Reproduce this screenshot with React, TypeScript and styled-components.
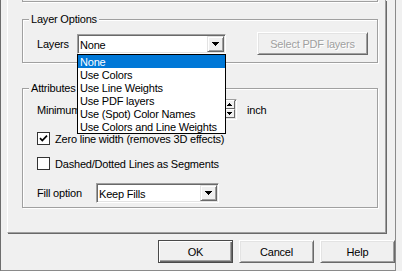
import styled, { createGlobalStyle } from "styled-components";

const GlobalStyle = createGlobalStyle`
  html, body {
    margin: 0;
    padding: 0;
    background: #f0f0f0;
  }
  body {
    font-family: "Liberation Sans", Arial, sans-serif;
    font-size: 11px;
    letter-spacing: -0.2px;
    color: #000;
  }
`;

const Screen = styled.div`
  width: 402px;
  height: 271px;
  display: flex;
  background: #f0f0f0;
  overflow: hidden;
`;

const Dialog = styled.div`
  width: 396px;
  height: 271px;
  box-sizing: border-box;
  border-left: 1px solid #6d6d6d;
  border-right: 1px solid #8a8a8a;
  border-bottom: 1px solid #8a8a8a;
  display: flex;
  flex-direction: column;
`;

const TabPage = styled.div`
  margin-left: 6px;
  width: 379px;
  height: 233px;
  flex-shrink: 0;
  box-sizing: border-box;
  border-left: 1px solid #fff;
  border-right: 1px solid #a0a0a0;
  border-bottom: 1px solid #a0a0a0;
  box-shadow: 1px 1px 0 #696969;
  display: flex;
  flex-direction: column;
  align-items: flex-start;
`;

const PrevGroupEdge = styled.div`
  margin-left: 14px;
  width: 356px;
  height: 2px;
  box-sizing: border-box;
  border: 1px solid #a0a0a0;
  border-top: none;
  box-shadow: 1px 1px 0 #fff;
`;

const Group = styled.div<{ $top: number; $height: number }>`
  position: relative;
  margin-left: 14px;
  margin-top: ${(p) => p.$top}px;
  width: 356px;
  height: ${(p) => p.$height}px;
  box-sizing: border-box;
  border: 1px solid #a0a0a0;
  box-shadow: inset 1px 1px 0 #fff, 1px 1px 0 #fff;
  padding-left: 14px;
  display: flex;
  flex-direction: column;
  align-items: flex-start;
`;

const GroupTitle = styled.span`
  position: absolute;
  top: -7px;
  left: 6px;
  padding: 0 2px;
  line-height: 13px;
  background: #f0f0f0;
`;

const Row = styled.div<{ $top: number; $height: number }>`
  display: flex;
  align-items: center;
  margin-top: ${(p) => p.$top}px;
  height: ${(p) => p.$height}px;
`;

const Label = styled.span<{ $width?: number; $left?: number }>`
  width: ${(p) => (p.$width ? `${p.$width}px` : "auto")};
  margin-left: ${(p) => p.$left ?? 0}px;
  flex-shrink: 0;
  line-height: 13px;
  padding-top: 1px;
  white-space: nowrap;
`;

const ComboWrap = styled.div<{ $width: number }>`
  position: relative;
  z-index: 10;
  width: ${(p) => p.$width}px;
  height: 20px;
`;

const Combo = styled.div`
  width: 100%;
  height: 100%;
  box-sizing: border-box;
  display: flex;
  padding: 1px;
  background: #fff;
  border-top: 1px solid #a0a0a0;
  border-left: 1px solid #a0a0a0;
  border-bottom: 1px solid #fff;
  border-right: 1px solid #fff;
  box-shadow: inset 1px 1px 0 #696969, inset -1px -1px 0 #e3e3e3;
`;

const ComboText = styled.span`
  flex: 1;
  padding-left: 1px;
  line-height: 16px;
  padding-top: 1px;
  box-sizing: border-box;
  white-space: nowrap;
  overflow: hidden;
`;

const DropButton = styled.div`
  width: 17px;
  height: 16px;
  box-sizing: border-box;
  display: flex;
  align-items: center;
  justify-content: center;
  background: #f0f0f0;
  border-top: 1px solid #e3e3e3;
  border-left: 1px solid #e3e3e3;
  border-right: 1px solid #696969;
  border-bottom: 1px solid #696969;
  box-shadow: inset 1px 1px 0 #fff, inset -1px -1px 0 #a0a0a0;
`;

const DropList = styled.div`
  position: absolute;
  top: 100%;
  left: 0;
  width: 100%;
  box-sizing: border-box;
  border: 1px solid #000;
  background: #fff;
`;

const ListItem = styled.div<{ $selected?: boolean }>`
  height: 13px;
  line-height: 13px;
  padding-left: 2px;
  padding-top: 1px;
  box-sizing: border-box;
  white-space: nowrap;
  overflow: hidden;
  background: ${(p) => (p.$selected ? "#0078d7" : "#fff")};
  color: ${(p) => (p.$selected ? "#fff" : "#000")};
`;

const PushButton = styled.button<{ $default?: boolean; $width: number; $left?: number }>`
  width: ${(p) => p.$width}px;
  height: 23px;
  margin: 0 0 0 ${(p) => p.$left ?? 0}px;
  padding: 1px 0 0;
  flex-shrink: 0;
  box-sizing: border-box;
  font: inherit;
  letter-spacing: inherit;
  color: #000;
  background: #f0f0f0;
  border-top: 1px solid ${(p) => (p.$default ? "#4a4a4a" : "#fff")};
  border-left: 1px solid ${(p) => (p.$default ? "#4a4a4a" : "#fff")};
  border-right: 1px solid ${(p) => (p.$default ? "#4a4a4a" : "#696969")};
  border-bottom: 1px solid ${(p) => (p.$default ? "#4a4a4a" : "#696969")};
  box-shadow: ${(p) =>
    p.$default
      ? "inset 1px 1px 0 #fff, inset -1px -1px 0 #696969, inset -2px -2px 0 #a0a0a0"
      : "inset 1px 1px 0 #e3e3e3, inset -1px -1px 0 #a0a0a0"};

  &:disabled {
    color: #a0a0a0;
    text-shadow: 1px 1px 0 #fff;
  }
`;

const EditBox = styled.div<{ $left: number }>`
  width: 88px;
  height: 21px;
  margin-left: ${(p) => p.$left}px;
  box-sizing: border-box;
  display: flex;
  justify-content: flex-end;
  background: #fff;
  border-top: 1px solid #a0a0a0;
  border-left: 1px solid #a0a0a0;
  border-bottom: 1px solid #fff;
  border-right: 1px solid #fff;
  box-shadow: inset 1px 1px 0 #696969, inset -1px -1px 0 #e3e3e3;
`;

const UpDown = styled.div`
  width: 11px;
  display: flex;
  flex-direction: column;
  margin: 0 1px 1px 0;
`;

const SpinButton = styled.div`
  flex: 1;
  display: flex;
  align-items: center;
  justify-content: center;
  box-sizing: border-box;
  background: #f0f0f0;
  border-top: 1px solid #fff;
  border-left: 1px solid #fff;
  border-right: 1px solid #696969;
  border-bottom: 1px solid #696969;
`;

const CheckRow = styled.label<{ $top: number }>`
  display: flex;
  align-items: center;
  gap: 5px;
  margin-top: ${(p) => p.$top}px;
  height: 13px;
  line-height: 13px;
`;

const CheckBox = styled.span`
  width: 13px;
  height: 13px;
  box-sizing: border-box;
  flex-shrink: 0;
  border: 1px solid #333;
  background: #fff;
  display: flex;
  align-items: center;
  justify-content: center;
`;

const CheckText = styled.span`
  padding-top: 1px;
  white-space: nowrap;
`;

const ButtonBar = styled.div`
  display: flex;
  gap: 6px;
  margin: 7px 0 0 157px;
`;

const Arrow = () => (
  <svg width="7" height="4" viewBox="0 0 7 4" shapeRendering="crispEdges">
    {[0, 1, 2, 3].map((i) => (
      <rect key={i} x={i} y={i} width={7 - i * 2} height={1} fill="#000" />
    ))}
  </svg>
);

const SmallArrow = ({ up }: { up?: boolean }) => (
  <svg width="5" height="3" viewBox="0 0 5 3" shapeRendering="crispEdges">
    {[0, 1, 2].map((i) => (
      <rect key={i} x={i} y={up ? 2 - i : i} width={5 - i * 2} height={1} fill="#000" />
    ))}
  </svg>
);

const layerChoices = [
  "None",
  "Use Colors",
  "Use Line Weights",
  "Use PDF layers",
  "Use (Spot) Color Names",
  "Use Colors and Line Weights",
];

export default function App() {
  return (
    <>
      <GlobalStyle />
      <Screen>
        <Dialog>
          <TabPage>
            <PrevGroupEdge />

            <Group $top={17} $height={44}>
              <GroupTitle>Layer Options</GroupTitle>
              <Row $top={12} $height={23}>
                <Label $width={40}>Layers</Label>
                <ComboWrap $width={149}>
                  <Combo>
                    <ComboText>None</ComboText>
                    <DropButton>
                      <Arrow />
                    </DropButton>
                  </Combo>
                  <DropList>
                    {layerChoices.map((choice, i) => (
                      <ListItem key={choice} $selected={i === 0}>
                        {choice}
                      </ListItem>
                    ))}
                  </DropList>
                </ComboWrap>
                <PushButton $width={111} $left={31} disabled>
                  Select PDF layers
                </PushButton>
              </Row>
            </Group>

            <Group $top={25} $height={120}>
              <GroupTitle>Attributes</GroupTitle>
              <Row $top={10} $height={21}>
                <Label $width={40}>Minimum</Label>
                <EditBox $left={72}>
                  <UpDown>
                    <SpinButton>
                      <SmallArrow up />
                    </SpinButton>
                    <SpinButton>
                      <SmallArrow />
                    </SpinButton>
                  </UpDown>
                </EditBox>
                <Label $left={10}>inch</Label>
              </Row>
              <CheckRow $top={12}>
                <CheckBox>
                  <svg width="9" height="9" viewBox="0 0 9 9">
                    <polyline points="1,4.2 3.3,6.6 8,1.6" fill="none" stroke="#000" strokeWidth="1.7" />
                  </svg>
                </CheckBox>
                <CheckText>Zero line width (removes 3D effects)</CheckText>
              </CheckRow>
              <CheckRow $top={12}>
                <CheckBox />
                <CheckText>Dashed/Dotted Lines as Segments</CheckText>
              </CheckRow>
              <Row $top={13} $height={20}>
                <Label $width={59}>Fill option</Label>
                <ComboWrap $width={123}>
                  <Combo>
                    <ComboText>Keep Fills</ComboText>
                    <DropButton>
                      <Arrow />
                    </DropButton>
                  </Combo>
                </ComboWrap>
              </Row>
            </Group>
          </TabPage>

          <ButtonBar>
            <PushButton $width={75} $default>
              OK
            </PushButton>
            <PushButton $width={75}>Cancel</PushButton>
            <PushButton $width={75}>Help</PushButton>
          </ButtonBar>
        </Dialog>
      </Screen>
    </>
  );
}
